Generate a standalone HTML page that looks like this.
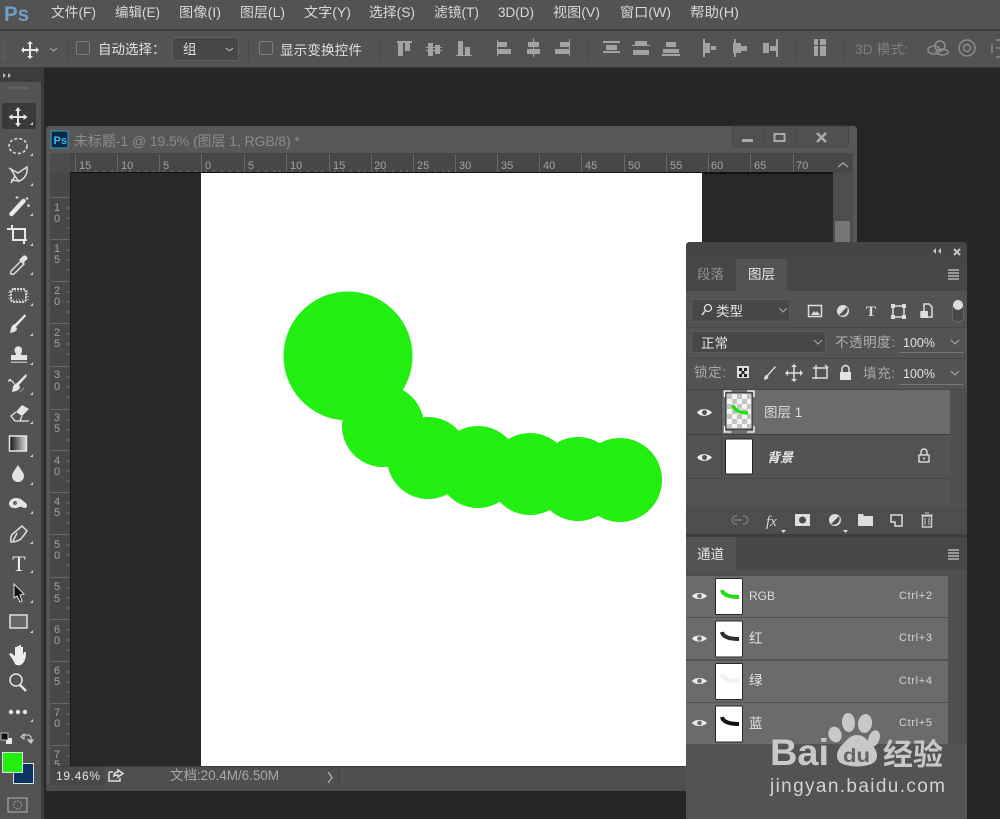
<!DOCTYPE html>
<html><head><meta charset="utf-8">
<style>
html,body{margin:0;padding:0;background:#262626;width:1000px;height:819px;overflow:hidden}
svg{display:block;filter:blur(.35px)}
text{font-family:"Liberation Sans","Noto Sans CJK SC",sans-serif}
</style></head><body>
<svg width="1000" height="819" viewBox="0 0 1000 819" xmlns="http://www.w3.org/2000/svg">
<rect width="1000" height="819" fill="#262626"/>
<!-- menu -->
<rect width="1000" height="29" fill="#535353"/>
<rect y="29" width="1000" height="2" fill="#3c3c3c"/>
<rect y="31" width="1000" height="37" fill="#535353"/>
<rect y="67" width="1000" height="1" fill="#3e3e3e"/>
<text x="4" y="21" font-size="21" font-weight="700" fill="#6f9fc9" textLength="25" lengthAdjust="spacingAndGlyphs">Ps</text>
<g font-size="13.500" fill="#d8d8d8">
<text x="51" y="17" textLength="45" lengthAdjust="spacingAndGlyphs">文件(F)</text>
<text x="115" y="17" textLength="45" lengthAdjust="spacingAndGlyphs">编辑(E)</text>
<text x="179" y="17" textLength="42" lengthAdjust="spacingAndGlyphs">图像(I)</text>
<text x="240" y="17" textLength="45" lengthAdjust="spacingAndGlyphs">图层(L)</text>
<text x="304" y="17" textLength="47" lengthAdjust="spacingAndGlyphs">文字(Y)</text>
<text x="369" y="17" textLength="46" lengthAdjust="spacingAndGlyphs">选择(S)</text>
<text x="434" y="17" textLength="45" lengthAdjust="spacingAndGlyphs">滤镜(T)</text>
<text x="498" y="17" textLength="36" lengthAdjust="spacingAndGlyphs">3D(D)</text>
<text x="553" y="17" textLength="47" lengthAdjust="spacingAndGlyphs">视图(V)</text>
<text x="620" y="17" textLength="51" lengthAdjust="spacingAndGlyphs">窗口(W)</text>
<text x="690" y="17" textLength="49" lengthAdjust="spacingAndGlyphs">帮助(H)</text>
</g>
<!-- options bar -->
<g stroke="#484848" stroke-width="1">
<path d="M68.500 37V60M248.500 37V60M379.500 37V60M587.500 37V60M795.500 37V60M844.500 37V60"/>
</g>
<path d="M4 38v24" stroke="#5e5e5e" stroke-width="3" stroke-dasharray="1 1"/>
<path d="M30 43v14M23 50h14" stroke="#e6e6e6" stroke-width="2"/>
<path d="M30 41l-3 3h6zM30 59l-3-3h6zM21 50l3-3v6zM39 50l-3-3v6z" fill="#e6e6e6"/>
<path d="M50 48l3.500 3 3.500-3" stroke="#aaa" fill="none"/>
<rect x="76.500" y="41.500" width="13" height="13" rx="2" fill="none" stroke="#7d7d7d"/>
<text x="98" y="54" font-size="13.500" fill="#e0e0e0">自动选择：</text>
<rect x="172.500" y="37.500" width="66" height="23" rx="2" fill="#474747" stroke="#5f5f5f"/>
<text x="183" y="54" font-size="13.500" fill="#e0e0e0">组</text>
<path d="M226 48l3.500 3 3.500-3" stroke="#bbb" fill="none"/>
<rect x="259.500" y="41.500" width="13" height="13" rx="2" fill="none" stroke="#7d7d7d"/>
<text x="280" y="55" font-size="13.500" fill="#e0e0e0" textLength="82">显示变换控件</text>
<!-- align icons -->
<g fill="#a3a3a3">
<path d="M397 41h15v2h-15zM398 43h5v13h-5zM405 43h5v8h-5z"/>
<path d="M426 47h16v1h-16zM426 50h16v1h-16zM428 43h5v13h-5zM435 45h5v9h-5z"/>
<path d="M456 55h16v1h-16zM458 41h5v14h-5zM465 47h5v8h-5z"/>
<path d="M497 40h1v16h-1zM498 42h9v5h-9zM498 49h13v5h-13z"/>
<path d="M533 38h1v19h-1zM528 42h11v5h-11zM527 49h13v5h-13z"/>
<path d="M569 39h1v17h-1zM560 42h9v5h-9zM555 49h14v5h-14z"/>
<path d="M603 41h17v2h-17zM606 45h11v4h-11zM603 51h17v2h-17zM606 49h11v1h-11z"/>
<path d="M632 45h18v1h-18zM635 41h12v4h-12zM633 50h16v5h-16z"/>
<path d="M662 54h18v2h-18zM666 42h10v5h-10zM663 49h16v4h-16z"/>
<path d="M703 39h2v18h-2zM705 43h5v10h-5zM711 46h5v4h-5z"/>
<path d="M734 39h2v18h-2zM733 43h8v10h-8zM741 46h6v5h-6z"/>
<path d="M763 43h6v10h-6zM776 39h2v18h-2zM770 46h6v5h-6z"/>
<path d="M814 39h4v6h-4zM814 46h4v10h-4zM820 39h6v6h-6zM820 46h6v10h-6z"/>
</g>
<text x="855" y="54" font-size="13.500" fill="#7f7f7f" textLength="53">3D 模式:</text>
<g fill="none" stroke="#8c8c8c" stroke-width="1.500">
<ellipse cx="934" cy="50" rx="6" ry="4"/><circle cx="940" cy="46" r="5"/><ellipse cx="942" cy="52" rx="6" ry="3"/>
<circle cx="967" cy="48" r="8"/><circle cx="967" cy="48" r="3.500"/>
<path d="M996 40h4M992 44v9M996 57h4M996 48h4"/>
</g>
<!-- toolbar -->
<rect x="0" y="68" width="42" height="751" fill="#535353"/>
<rect x="0" y="68" width="42" height="14" fill="#3d3d3d"/>
<rect x="41" y="68" width="3" height="751" fill="#3c3c3c"/>
<path d="M3 73l3 2.500-3 2.500zM8 73l3 2.500-3 2.500z" fill="#bbb"/>
<path d="M8 88h22" stroke="#6a6a6a" stroke-width="3" stroke-dasharray="1 1"/>
<rect x="2" y="103" width="34" height="26" rx="2" fill="#3a3a3a"/>
<g fill="#e3e3e3">
<path d="M18 109v16M10 117h16" stroke="#e3e3e3" stroke-width="2"/>
<path d="M18 107l-3 4h6zM18 127l-3-4h6zM8.500 117l4-3v6zM27.500 117l-4-3v6z"/>
</g>
<!-- tool corners -->
<g fill="#cfcfcf">
<path d="M33 122v3h-3z"/>
<path d="M33 153v3h-3zM33 183v3h-3zM33 213v3h-3zM33 243v3h-3zM33 272v3h-3zM33 303v3h-3zM33 333v3h-3zM33 362v3h-3zM33 392v3h-3zM33 421v3h-3zM33 454v3h-3zM33 482v3h-3zM33 511v3h-3zM33 541v3h-3zM33 570v3h-3zM33 600v3h-3zM33 630v3h-3zM33 719v3h-3z"/>
</g>
<ellipse cx="18" cy="146" rx="9" ry="7.500" fill="none" stroke="#dcdcdc" stroke-width="1.500" stroke-dasharray="3 2"/>
<path d="M9 168l9 5 9-6c1 6-2 12-8 14l-8-1M11 169l4 7-4 7M15 176l4 6" fill="none" stroke="#dcdcdc" stroke-width="1.500"/>
<path d="M11.500 214l12-13" stroke="#e8e8e8" stroke-width="4.500" stroke-linecap="round"/>
<path d="M17 196v3M15.500 197.500h3M27 197v3M25.500 198.500h3" stroke="#ddd"/><circle cx="28.500" cy="205.500" r="1.300" fill="#ddd"/>
<path d="M7 229h6v11h14M12 225v4M24 244v-4M14 229h11v11" fill="none" stroke="#e8e8e8" stroke-width="2"/>
<path d="M11 274c-1-2 0-3 1-4l9-9 3 3-9 9c-1 1-3 2-4 1z" fill="#535353" stroke="#dedede" stroke-width="1.500"/>
<path d="M19 260l4-4c1-1 3-1 4 1s0 3-1 3l-3 4z" fill="#e3e3e3"/>
<rect x="11" y="289" width="15" height="13" rx="3" fill="none" stroke="#dedede" stroke-width="2" stroke-dasharray="2 1"/><rect x="9" y="291" width="19" height="9" fill="none" stroke="#dedede" stroke-dasharray="1 2"/>
<path d="M26 316l-10 11c2 2 1 5-6 6 1-4 1-8 5-9l10-10z" fill="#e5e5e5"/>
<path d="M14.500 350a3.800 3.800 0 1 1 7.600 0c0 2-1 3-1 5h6v5H11v-5h5c0-2-1.500-3-1.500-5z" fill="#e5e5e5"/><path d="M11 361.500h16v1.500H11z" fill="#b5b5b5"/>
<path d="M27 376l-8 9c2 2 1 6-7 7 1-5 1-8 5-9l9-9z" fill="#e5e5e5"/><path d="M14 384c-1-3-3-4-6-3M8 381l3-2" stroke="#ddd" fill="none" stroke-width="1.300"/><path d="M20 392l4-4" stroke="#ccc" stroke-dasharray="1 1"/>
<path d="M16 412l6-7 7 4-7 7z" fill="#e5e5e5"/><path d="M16 412l-5 4 4 5h5l2-5M15 421h14" stroke="#e5e5e5" fill="none" stroke-width="1.300"/>
<defs><linearGradient id="g"><stop offset="0" stop-color="#111"/><stop offset="1" stop-color="#ddd"/></linearGradient></defs>
<rect x="9.500" y="436" width="17" height="15" fill="url(#g)" stroke="#e6e6e6" stroke-width="1.500"/>
<path d="M18 465c3 5 6 8 6 11a6 6 0 0 1-12 0c0-3 3-6 6-11z" fill="#e3e3e3"/>
<path d="M9 503c2-6 9-6 13-3 2 2 5 3 5 6 0 2-3 3-5 1-3-1-5 2-8 1-3 0-5-2-5-5z" fill="#e5e5e5"/><circle cx="15" cy="503" r="2" fill="#666"/>
<path d="M11 542c-1-6 1-8 4-10l7-6 5 5-6 8c-3 2-6 3-10 3zM17 533l-4 8" fill="none" stroke="#e0e0e0" stroke-width="1.500"/>
<text x="19" y="571" font-size="22" fill="#ededed" text-anchor="middle" style="font-family:'Liberation Serif',serif">T</text>
<path d="M14 584l10 10-4 1 2 6-2 1-3-6-3 2z" fill="#111" stroke="#ddd"/>
<rect x="10" y="615" width="17" height="13" fill="#666" stroke="#e0e0e0" stroke-width="1.500"/>
<path d="M13 660l-4-6 2-1 4 3v-9h2v6-7h2v7-8h2v8-6h2v8l1-3h2c0 5-1 9-3 11-2 3-6 3-8 1z" fill="#ededed"/>
<circle cx="16" cy="680" r="6" fill="none" stroke="#e5e5e5" stroke-width="1.500"/><path d="M20 685l6 6" stroke="#e5e5e5" stroke-width="2.500"/>
<circle cx="11" cy="712" r="2.200" fill="#e5e5e5"/><circle cx="18" cy="712" r="2.200" fill="#e5e5e5"/><circle cx="25" cy="712" r="2.200" fill="#e5e5e5"/>
<rect x="6" y="738" width="6" height="6" fill="#e8e8e8"/><rect x="1" y="733" width="7" height="7" fill="#111" stroke="#ddd" stroke-width=".8"/>
<path d="M23 735h6l2 2v5M21 737l3-3v5zM31 743l-3-3h5z" stroke="#ddd" fill="none" stroke-width="1"/>
<rect x="13.500" y="763.500" width="20" height="20" fill="#0b3465" stroke="#e0e0e0"/>
<rect x="2.500" y="752.500" width="20" height="20" fill="#22ee11" stroke="#e0e0e0"/>
<!-- document window -->
<path d="M46 791V130q0-4 4-4H853q4 0 4 4V791z" fill="#575757"/>
<rect x="46" y="785" width="811" height="6" fill="#4d4d4d"/>
<rect x="50" y="153" width="803" height="632" fill="#474747"/>
<rect x="8" y="798" width="19" height="14" fill="#535353" stroke="#b5b5b5"/><circle cx="17.500" cy="805" r="4" fill="none" stroke="#999" stroke-dasharray="2 1"/>
<rect x="51" y="131" width="17" height="17" fill="#0a2a44" stroke="#3a9ccc"/>
<text x="53.500" y="144" font-size="11" font-weight="700" fill="#49b6ea">Ps</text>
<text x="74" y="146" font-size="14" fill="#8c8c8c" textLength="226">未标题-1 @ 19.5% (图层 1, RGB/8) *</text>
<rect x="732.500" y="126" width="116" height="21" rx="3" fill="#505050" stroke="#444"/>
<path d="M763.500 126v21M795.500 126v21" stroke="#444"/>
<rect x="742" y="139" width="11" height="3" fill="#aaa"/>
<rect x="774.500" y="134" width="10" height="7" fill="none" stroke="#aaa" stroke-width="2"/>
<path d="M817 133l9 9M826 133l-9 9" stroke="#aaa" stroke-width="2.500"/>
<!-- rulers -->
<rect x="50" y="153" width="20" height="20" fill="#4c4c4c"/>
<rect x="70" y="172" width="763" height="1" fill="#111"/>
<g stroke="#686868">
<path d="M75.500 154v18M117.500 154v18M159.500 154v18M201.500 154v18M244.500 154v18M286.500 154v18M329.500 154v18M371.500 154v18M413.500 154v18M455.500 154v18M497.500 154v18M539.500 154v18M581.500 154v18M624.500 154v18M666.500 154v18M708.500 154v18M750.500 154v18M793.500 154v18"/>
<path d="M51 197.500h18M51 239.500h18M51 281.500h18M51 323.500h18M51 366.500h18M51 409.500h18M51 450.500h18M51 492.500h18M51 534.500h18M51 577.500h18M51 619.500h18M51 661.500h18M51 703.500h18M51 745.500h18" />
</g>
<path d="M80 172v-2M88 172v-2M96 172v-2M104 172v-2M112 172v-2M122 172v-2M130 172v-2M138 172v-2M146 172v-2M154 172v-2M164 172v-2M172 172v-2M180 172v-2M188 172v-2M196 172v-2M206 172v-2M214 172v-2M222 172v-2M230 172v-2M238 172v-2M250 172v-2M258 172v-2M266 172v-2M274 172v-2M280 172v-2M292 172v-2M300 172v-2M308 172v-2M316 172v-2M322 172v-2M335 172v-2M343 172v-2M351 172v-2M359 172v-2M365 172v-2M377 172v-2M385 172v-2M393 172v-2M401 172v-2M407 172v-2M419 172v-2M427 172v-2M435 172v-2M443 172v-2M449 172v-2" stroke="#7a7a7a"/>
<g font-size="11" fill="#a3a3a3">
<text x="79" y="169">15</text><text x="121" y="169">10</text><text x="163" y="169">5</text><text x="205" y="169">0</text><text x="248" y="169">5</text><text x="290" y="169">10</text><text x="333" y="169">15</text><text x="374" y="169">20</text><text x="417" y="169">25</text><text x="459" y="169">30</text><text x="501" y="169">35</text><text x="543" y="169">40</text><text x="585" y="169">45</text><text x="628" y="169">50</text><text x="670" y="169">55</text><text x="711" y="169">60</text><text x="754" y="169">65</text><text x="796" y="169">70</text>
</g>
<g font-size="11" fill="#a3a3a3" text-anchor="middle">
<text x="57" y="211">1</text><text x="57" y="222">0</text>
<text x="57" y="252">1</text><text x="57" y="263">5</text>
<text x="57" y="294">2</text><text x="57" y="305">0</text>
<text x="57" y="336">2</text><text x="57" y="347">5</text>
<text x="57" y="378">3</text><text x="57" y="390">0</text>
<text x="57" y="421">3</text><text x="57" y="432">5</text>
<text x="57" y="464">4</text><text x="57" y="475">0</text>
<text x="57" y="505">4</text><text x="57" y="516">5</text>
<text x="57" y="548">5</text><text x="57" y="559">0</text>
<text x="57" y="590">5</text><text x="57" y="602">5</text>
<text x="57" y="633">6</text><text x="57" y="644">0</text>
<text x="57" y="674">6</text><text x="57" y="685">5</text>
<text x="57" y="716">7</text><text x="57" y="727">0</text>
<text x="57" y="758">7</text><text x="57" y="768">5</text>
</g>
<path d="M66 208h3M66 218h3M66 228h3M66 250h3M66 260h3M66 270h3M66 292h3M66 302h3M66 312h3M66 334h3M66 344h3M66 354h3M66 377h3M66 387h3M66 397h3M66 420h3M66 430h3M66 440h3M66 461h3M66 471h3M66 481h3M66 503h3M66 513h3M66 523h3M66 545h3M66 555h3M66 565h3M66 588h3M66 598h3M66 608h3M66 630h3M66 640h3M66 650h3M66 672h3M66 682h3M66 692h3M66 714h3M66 724h3M66 734h3M66 756h3" stroke="#777"/>
<!-- canvas -->
<rect x="70" y="173" width="763" height="593" fill="#282828"/>
<rect x="70" y="173" width="1" height="593" fill="#1c1c1c"/>
<rect x="201" y="173" width="501" height="593" fill="#fff"/>
<rect x="702" y="173" width="131" height="1" fill="#111"/>
<g fill="#22ee11">
<circle cx="348" cy="356" r="64.500"/>
<circle cx="383" cy="426" r="41"/>
<circle cx="428" cy="458" r="41"/>
<circle cx="478" cy="467" r="41"/>
<circle cx="530" cy="474" r="41"/>
<circle cx="578" cy="479" r="42"/>
<circle cx="620" cy="480" r="42"/>
</g>
<!-- scrollbar -->
<rect x="833" y="173" width="20" height="593" fill="#4d4d4d"/>
<rect x="853" y="153" width="4" height="632" fill="#575757"/>
<rect x="835" y="221" width="15" height="21" fill="#757575"/>
<path d="M838 167l5-4 5 4" fill="none" stroke="#9a9a9a" stroke-width="1.500"/>
<!-- status bar -->
<rect x="50" y="766" width="636" height="19" fill="#4f4f4f"/>
<rect x="50" y="766" width="636" height="1" fill="#3b3b3b"/>
<rect x="50" y="767" width="53" height="18" fill="#484848"/>
<rect x="103.500" y="767" width="1" height="18" fill="#434343"/>
<rect x="338" y="767" width="1" height="18" fill="#434343"/>
<text x="56" y="780" font-size="12" fill="#e3e3e3" textLength="44">19.46%</text>
<path d="M109 772v9h11v-3M109 772h4M114 776c0-3 2-4 4-4v-2l5 3.500-5 3.500v-2c-2 0-3 0-4 1z" fill="none" stroke="#ddd" stroke-width="1.500"/>
<text x="170" y="780" font-size="13.500" fill="#a8a8a8" textLength="109">文档:20.4M/6.50M</text>
<path d="M328 772l4 5.500-4 5.500" fill="none" stroke="#b3b3b3" stroke-width="1.300"/>
<!-- right panel -->
<path d="M686 819V246q0-4 4-4H963q4 0 4 4V819z" fill="#535353"/>
<rect x="686" y="246" width="281" height="13" fill="#454545"/>
<path d="M686 246q0-4 4-4H963q4 0 4 4z" fill="#454545"/>
<rect x="686" y="259" width="281" height="32" fill="#474747"/>
<rect x="736" y="259" width="51" height="32" fill="#535353"/>
<path d="M936 248l-3 3 3 3zM941 248l-3 3 3 3z" fill="#c5c5c5"/>
<path d="M954 249l6 6M960 249l-6 6" stroke="#c5c5c5" stroke-width="2"/>
<text x="697" y="279" font-size="13.500" fill="#8f8f8f">段落</text>
<text x="748" y="279" font-size="13.500" fill="#e3e3e3">图层</text>
<path d="M948 270h11M948 273h11M948 276h11M948 279h11" stroke="#b5b5b5" stroke-width="1.500"/>
<rect x="691.500" y="299.500" width="98" height="22" rx="2" fill="#474747" stroke="#5c5c5c"/>
<circle cx="708" cy="308" r="3.500" fill="none" stroke="#ddd" stroke-width="1.300"/><path d="M705 311l-3 4" stroke="#ddd" stroke-width="1.500"/>
<text x="716" y="316" font-size="13.500" fill="#e3e3e3">类型</text>
<path d="M779 308l4 4 4-4" fill="none" stroke="#aaa"/>
<rect x="808.500" y="305.500" width="13" height="11" fill="none" stroke="#ddd" stroke-width="1.500"/><path d="M811 315l3-4 2 2 1-2 3 4z" fill="#ddd"/>
<circle cx="843" cy="311" r="6" fill="#ddd"/><path d="M839 315a6 6 0 0 0 8-8z" fill="#535353"/>
<text x="871" y="316" font-size="15" font-weight="700" fill="#ddd" text-anchor="middle" style="font-family:'Liberation Serif',serif">T</text>
<rect x="893" y="306" width="11" height="11" fill="none" stroke="#ddd" stroke-width="1.500"/><path d="M891 304h4v4h-4zM902 304h4v4h-4zM891 315h4v4h-4zM902 315h4v4h-4z" fill="#ddd"/>
<path d="M924 304h5l3 3v10h-11v-5h3z" fill="none" stroke="#ddd" stroke-width="1.500"/><rect x="921" y="311" width="7" height="7" fill="#ddd"/>
<rect x="952.500" y="302" width="11" height="20" rx="5.500" fill="#474747" stroke="#666"/><circle cx="958" cy="305" r="5" fill="#ddd"/>
<rect x="686" y="327" width="281" height="1" fill="#474747"/>
<rect x="691.500" y="331.500" width="134" height="21" rx="2" fill="#474747" stroke="#5c5c5c"/>
<text x="701" y="348" font-size="13.500" fill="#e6e6e6">正常</text>
<path d="M814 340l4 4 4-4" fill="none" stroke="#aaa"/>
<text x="835" y="347" font-size="13.500" fill="#b0b0b0" textLength="60">不透明度:</text>
<text x="903" y="347" font-size="12.500" fill="#e0e0e0">100%</text>
<path d="M899 352.500h64" stroke="#777"/>
<path d="M951 340l4 4 4-4" fill="none" stroke="#aaa"/>
<rect x="686" y="358" width="281" height="1" fill="#474747"/>
<text x="694" y="377" font-size="13.500" fill="#a8a8a8" textLength="32">锁定:</text>
<rect x="737" y="366" width="12" height="12" fill="#ddd"/><path d="M739 368h3v3h-3zM744 368h3v3h-3zM741.500 371h3v3h-3zM739 374h3v3h-3zM744 374h3v3h-3z" fill="#222"/>
<path d="M776 367l-8 9c1 2 0 3-4 4 0-3 1-5 3-5l8-9z" fill="#ddd"/>
<path d="M794 366v14M787 373h14" stroke="#ddd" stroke-width="1.500"/><path d="M794 364l-3 3h6zM794 382l-3-3h6zM785 373l3-3v6zM803 373l-3-3v6z" fill="#ddd"/>
<path d="M813 368h14v10h-11M816 365v14M825 365l3 3M812 378h4" fill="none" stroke="#ddd" stroke-width="1.500"/>
<rect x="840" y="372" width="11" height="8" fill="#e3e3e3"/><path d="M842 372v-3a3.500 3.500 0 0 1 7 0v3" fill="none" stroke="#e3e3e3" stroke-width="1.500"/>
<text x="863" y="378" font-size="13.500" fill="#a8a8a8" textLength="32">填充:</text>
<text x="903" y="378" font-size="12.500" fill="#e0e0e0">100%</text>
<path d="M899 384.500h64" stroke="#777"/>
<path d="M951 371l4 4 4-4" fill="none" stroke="#aaa"/>
<rect x="686" y="389" width="281" height="1" fill="#474747"/>
<!-- layers -->
<rect x="686" y="390" width="264" height="44" fill="#6b6b6b"/>
<rect x="686" y="390" width="35" height="44" fill="#535353"/>
<rect x="686" y="434" width="264" height="1" fill="#3e3e3e"/>
<rect x="721" y="435" width="229" height="44" fill="#535353"/>
<rect x="686" y="478" width="264" height="1" fill="#474747"/>
<rect x="721" y="390" width="1" height="89" fill="#474747"/>
<rect x="950" y="390" width="17" height="115" fill="#4f4f4f"/>
<path d="M697 412.500c3-4.500 11-4.500 15 0-4 4.500-12 4.500-15 0z" fill="#ececec"/><circle cx="704.500" cy="412.500" r="2.500" fill="#535353"/>
<path d="M697 457.500c3-4.500 11-4.500 15 0-4 4.500-12 4.500-15 0z" fill="#ececec"/><circle cx="704.500" cy="457.500" r="2.500" fill="#535353"/>
<rect x="726" y="393" width="26" height="36" fill="#f4f4f4" stroke="#222"/>
<path d="M727 394h5v5h-5zM737 394h5v5h-5zM747 394h4v5h-4zM732 399h5v5h-5zM742 399h5v5h-5zM727 404h5v5h-5zM737 404h5v5h-5zM747 404h4v5h-4zM732 409h5v5h-5zM742 409h5v5h-5zM727 414h5v5h-5zM737 414h5v5h-5zM747 414h4v5h-4zM732 419h5v5h-5zM742 419h5v5h-5zM727 424h5v4h-5zM737 424h5v4h-5zM747 424h4v4h-4z" fill="#c4c4c4"/>
<path d="M733 405c1 5 7 8 15 8" fill="none" stroke="#22dd11" stroke-width="3.500"/>
<path d="M724.500 397v-6h7M747 391h7v6M724.500 426v6h7M747 432h7v-6" fill="none" stroke="#fff" stroke-width="1.300"/>
<text x="764" y="417" font-size="13.500" fill="#dcdcdc">图层 1</text>
<rect x="725.500" y="439" width="27" height="35" rx="1" fill="#fff" stroke="#222"/>
<text x="767" y="462" font-size="13" font-style="italic" font-weight="700" fill="#e8e8e8">背景</text>
<rect x="919" y="455" width="10" height="7" fill="none" stroke="#ddd" stroke-width="1.400"/><path d="M921 455v-3a3 3 0 0 1 6 0v3" fill="none" stroke="#ddd" stroke-width="1.400"/><circle cx="924" cy="458.500" r="1" fill="#ddd"/>
<!-- layers footer -->
<rect x="686" y="507" width="281" height="27" fill="#4d4d4d"/>
<path d="M734 520h8M737 516h-1a4 4 0 0 0 0 8h1M743 516h1a4 4 0 0 1 0 8h-1" fill="none" stroke="#777" stroke-width="1.500"/>
<text x="766" y="526" font-size="15" font-style="italic" fill="#d8d8d8" style="font-family:'Liberation Serif',serif">fx</text>
<path d="M781 530h5l-2.500 3z" fill="#ddd"/>
<rect x="795" y="514" width="15" height="12" fill="#ddd"/><circle cx="802.500" cy="520" r="3.500" fill="#4d4d4d"/>
<circle cx="835" cy="520" r="6" fill="#ddd"/><path d="M831 524a6 6 0 0 0 8-8z" fill="#4d4d4d"/>
<path d="M843 530h5l-2.500 3z" fill="#ddd"/>
<path d="M858 514h5l1 2h9v10h-15z" fill="#ddd"/>
<path d="M891 515h11v11h-7v-4h-4z" fill="none" stroke="#ddd" stroke-width="1.500"/>
<rect x="922.500" y="516" width="9" height="11" fill="none" stroke="#ccc" stroke-width="1.500"/><path d="M921 515h12M925 513h4M925 518v7M929 518v7" stroke="#ccc"/>
<!-- channels -->
<rect x="686" y="534" width="281" height="3" fill="#3d3d3d"/>
<rect x="686" y="537" width="281" height="33" fill="#474747"/>
<rect x="686" y="537" width="50" height="33" fill="#535353"/>
<rect x="686" y="570" width="281" height="6" fill="#4f4f4f"/>
<text x="697" y="559" font-size="13.500" fill="#e3e3e3">通道</text>
<path d="M948 550h11M948 553h11M948 556h11M948 559h11" stroke="#b5b5b5" stroke-width="1.500"/>
<rect x="686" y="576" width="262" height="41" fill="#6b6b6b"/>
<rect x="686" y="618" width="262" height="41" fill="#6b6b6b"/>
<rect x="686" y="661" width="262" height="41" fill="#6b6b6b"/>
<rect x="686" y="703" width="262" height="41" fill="#6b6b6b"/>
<rect x="948" y="576" width="19" height="168" fill="#4f4f4f"/>
<g fill="#ececec">
<path d="M692 596c3-4 11-4 15 0-4 4-12 4-15 0z"/><path d="M692 638.500c3-4 11-4 15 0-4 4-12 4-15 0z"/><path d="M692 681c3-4 11-4 15 0-4 4-12 4-15 0z"/><path d="M692 723c3-4 11-4 15 0-4 4-12 4-15 0z"/>
</g>
<g fill="#6b6b6b"><circle cx="699.500" cy="596" r="2.300"/><circle cx="699.500" cy="638.500" r="2.300"/><circle cx="699.500" cy="681" r="2.300"/><circle cx="699.500" cy="723" r="2.300"/></g>
<g fill="#fff" stroke="#2a2a2a">
<rect x="715.500" y="578.500" width="27" height="36" rx="1"/><rect x="715.500" y="621" width="27" height="36" rx="1"/><rect x="715.500" y="663.500" width="27" height="36" rx="1"/><rect x="715.500" y="706" width="27" height="36" rx="1"/>
</g>
<g fill="none" stroke-width="4">
<path d="M722 590c1 5 7 7 17 7" stroke="#22dd11"/>
<path d="M722 632c1 5 7 7 17 7" stroke="#2e2e2e"/>
<path d="M722 674c1 5 7 7 17 7" stroke="#f0f0f0"/>
<path d="M722 717c1 5 7 7 17 7" stroke="#111"/>
</g>
<text x="749" y="600" font-size="12" fill="#dcdcdc" textLength="26">RGB</text>
<text x="749" y="643" font-size="13.500" fill="#e3e3e3">红</text>
<text x="749" y="685" font-size="13.500" fill="#e3e3e3">绿</text>
<text x="749" y="728" font-size="13.500" fill="#e3e3e3">蓝</text>
<g font-size="11" fill="#d5d5d5">
<text x="899" y="599" textLength="33">Ctrl+2</text><text x="899" y="641" textLength="33">Ctrl+3</text><text x="899" y="684" textLength="33">Ctrl+4</text><text x="899" y="726" textLength="33">Ctrl+5</text>
</g>
<!-- watermark -->
<g fill="#c8c8c8">
<ellipse cx="848.500" cy="722.500" rx="6.500" ry="9.500" transform="rotate(-5 848.500 722.500)"/>
<ellipse cx="865" cy="723.500" rx="7" ry="9.500" transform="rotate(8 865 723.500)"/>
<ellipse cx="835" cy="734.500" rx="6.500" ry="8" transform="rotate(-20 835 734.500)"/>
<ellipse cx="874" cy="738.500" rx="5.500" ry="8.500" transform="rotate(20 874 738.500)"/>
<path d="M857 735c7 0 11 6 16 11 6 7 6 17-5 19-7 2-15 2-22 0-11-2-11-12-5-19 5-5 9-11 16-11z"/>
</g>
<text x="770" y="765" font-size="37.500" font-weight="700" fill="#c8c8c8" textLength="59" lengthAdjust="spacingAndGlyphs">Bai</text>
<text x="843" y="762" font-size="19" font-weight="700" fill="#636363" textLength="27" lengthAdjust="spacingAndGlyphs">du</text>
<text x="883" y="765" font-size="30" font-weight="700" fill="#c8c8c8" textLength="60" lengthAdjust="spacingAndGlyphs">经验</text>
<text x="770" y="792" font-size="19" fill="#d2d2d2" textLength="175">jingyan.baidu.com</text>
</svg>
</body></html>
